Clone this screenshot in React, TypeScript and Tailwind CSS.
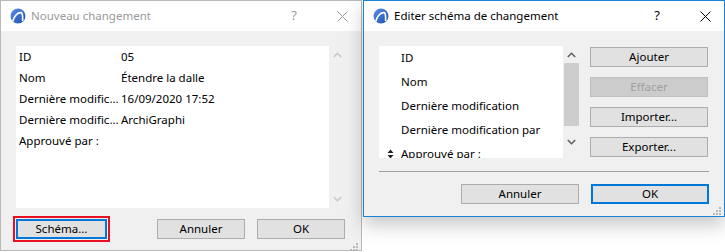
import React from "react";

const font = { fontFamily: '"Segoe UI", "Noto Sans", sans-serif' };

function Logo() {
  return (
    <svg width="16" height="16" viewBox="0 0 16 16">
      <defs>
        <linearGradient id="lg" x1="0" y1="0" x2="1" y2="1">
          <stop offset="0" stopColor="#5b8fe6" />
          <stop offset="1" stopColor="#1c4fb0" />
        </linearGradient>
      </defs>
      <circle cx="8" cy="8" r="7.5" fill="url(#lg)" />
      <path d="M3 12.8 C4.5 7.5 8 4 11.2 4.6 C12.6 5 12.8 7 12.6 12.4" stroke="#fff" strokeWidth="1.7" fill="none" strokeLinecap="round" />
    </svg>
  );
}

function CloseIcon({ color }: { color: string }) {
  return (
    <svg width="11" height="11" viewBox="0 0 11 11">
      <path d="M0.5 0.5 L10.5 10.5 M10.5 0.5 L0.5 10.5" stroke={color} strokeWidth="1" />
    </svg>
  );
}

function SortIcon() {
  return (
    <svg width="7" height="10" viewBox="0 0 7 10">
      <path d="M3.5 0.5 L6.5 4 L0.5 4 Z M3.5 9.5 L6.5 6 L0.5 6 Z" fill="#222" />
    </svg>
  );
}

function Grip() {
  return (
    <div className="grid grid-cols-3 gap-[1px] w-[8px]">
      <span />
      <span />
      <span className="w-[2px] h-[2px] bg-[#b8b8b8]" />
      <span />
      <span className="w-[2px] h-[2px] bg-[#b8b8b8]" />
      <span className="w-[2px] h-[2px] bg-[#b8b8b8]" />
      <span className="w-[2px] h-[2px] bg-[#b8b8b8]" />
      <span className="w-[2px] h-[2px] bg-[#b8b8b8]" />
      <span className="w-[2px] h-[2px] bg-[#b8b8b8]" />
    </div>
  );
}

function Chevron({ up, color }: { up?: boolean; color: string }) {
  return (
    <svg width="9" height="6" viewBox="0 0 9 6">
      <path d={up ? "M0.8 5 L4.5 1.3 L8.2 5" : "M0.8 1 L4.5 4.7 L8.2 1"} stroke={color} strokeWidth="1.6" fill="none" />
    </svg>
  );
}

function Btn({ children, w, disabled, primary }: { children: React.ReactNode; w: string; disabled?: boolean; primary?: boolean }) {
  return (
    <div
      className={`${w} h-[20px] flex items-center justify-center text-[11.5px] ${
        disabled
          ? "bg-[#cccccc] border border-[#bfbfbf] text-[#a0a0a0]"
          : primary
          ? "bg-[#e1e1e1] border-2 border-[#0078d7] text-black"
          : "bg-[#e1e1e1] border border-[#adadad] text-black"
      }`}
    >
      {children}
    </div>
  );
}

export default function App() {
  const rows = [
    ["ID", "05"],
    ["Nom", "Étendre la dalle"],
    ["Dernière modific...", "16/09/2020 17:52"],
    ["Dernière modific...", "ArchiGraphi"],
    ["Approuvé par :", ""],
  ];
  const fields = ["ID", "Nom", "Dernière modification", "Dernière modification par", "Approuvé par :"];

  return (
    <div className="relative w-[725px] h-[252px] bg-white overflow-hidden" style={font}>
      {/* inactive window */}
      <div className="absolute left-0 top-0 w-[362px] h-[251px] border border-[#b9b9b9] bg-[#f0f0f0] flex flex-col">
        <div className="h-[30px] bg-white flex items-center pl-[9px] shrink-0">
          <Logo />
          <span className="ml-[5px] text-[11.5px] text-[#9a9a9a]">Nouveau changement</span>
          <span className="ml-auto text-[13px] text-[#9a9a9a] mr-[40px]">?</span>
          <span className="mr-[13px]">
            <CloseIcon color="#9a9a9a" />
          </span>
        </div>
        <div className="flex-1 flex flex-col px-[15px] pt-[15px]">
          <div className="flex h-[162px]">
            <div className="flex-1 bg-white text-[11.5px] text-black">
              {rows.map(([k, v], i) => (
                <div key={i} className="h-[21px] flex items-center">
                  <span className="w-[105px] pl-[3px] whitespace-nowrap overflow-hidden">{k}</span>
                  <span>{v}</span>
                </div>
              ))}
            </div>
            <div className="w-[17px] flex flex-col items-center justify-between py-[6px]">
              <Chevron up color="#c8c8c8" />
              <Chevron color="#c8c8c8" />
            </div>
          </div>
          <div className="flex items-center mt-[8px] -ml-[3px]">
            <div className="border-2 border-[#e81123] p-[1px]">
              <Btn w="w-[91px]" primary>
                Schéma...
              </Btn>
            </div>
            <div className="ml-[47px]">
              <Btn w="w-[88px]">Annuler</Btn>
            </div>
            <div className="ml-[12px]">
              <Btn w="w-[88px]">OK</Btn>
            </div>
          </div>
          <div className="flex justify-end -mr-[12px] mt-[1px]">
            <Grip />
          </div>
        </div>
      </div>

      {/* active window */}
      <div className="absolute left-[363px] top-0 w-[362px] h-[217px] border border-[#1883d7] bg-[#f0f0f0] flex flex-col shadow-[0_8px_18px_rgba(0,0,0,0.22)]">
        <div className="h-[30px] bg-white flex items-center pl-[9px] shrink-0">
          <Logo />
          <span className="ml-[5px] text-[11.5px] text-black">Editer schéma de changement</span>
          <span className="ml-auto text-[13px] text-black mr-[40px]">?</span>
          <span className="mr-[13px]">
            <CloseIcon color="#000" />
          </span>
        </div>
        <div className="flex-1 flex flex-col px-[15px] pt-[15px]">
          <div className="flex">
            <div className="flex h-[112px]">
              <div className="w-[184px] bg-white overflow-hidden text-[11.5px] text-black">
                {fields.map((f, i) => (
                  <div key={i} className="h-[24px] flex items-center shrink-0">
                    <span className="w-[22px] flex justify-center">{i === 4 ? <SortIcon /> : null}</span>
                    <span className="whitespace-nowrap">{f}</span>
                  </div>
                ))}
              </div>
              <div className="w-[17px] flex flex-col items-center bg-[#f0f0f0]">
                <div className="h-[17px] flex items-center justify-center">
                  <Chevron up color="#606060" />
                </div>
                <div className="w-[15px] h-[63px] bg-[#cdcdcd]" />
                <div className="flex-1 flex items-center justify-center">
                  <Chevron color="#606060" />
                </div>
              </div>
            </div>
            <div className="ml-[10px] flex flex-col gap-[10px] pt-[1px]">
              <Btn w="w-[118px]">Ajouter</Btn>
              <Btn w="w-[118px]" disabled>
                Effacer
              </Btn>
              <Btn w="w-[118px]">Importer...</Btn>
              <Btn w="w-[118px]">Exporter...</Btn>
            </div>
          </div>
          <div className="h-[1px] bg-[#a0a0a0] mt-[13px]" />
          <div className="flex justify-end gap-[12px] mt-[12px]">
            <Btn w="w-[118px]">Annuler</Btn>
            <Btn w="w-[118px]" primary>
              OK
            </Btn>
          </div>
          <div className="flex justify-end -mr-[12px] mt-[3px]">
            <Grip />
          </div>
        </div>
      </div>
    </div>
  );
}
